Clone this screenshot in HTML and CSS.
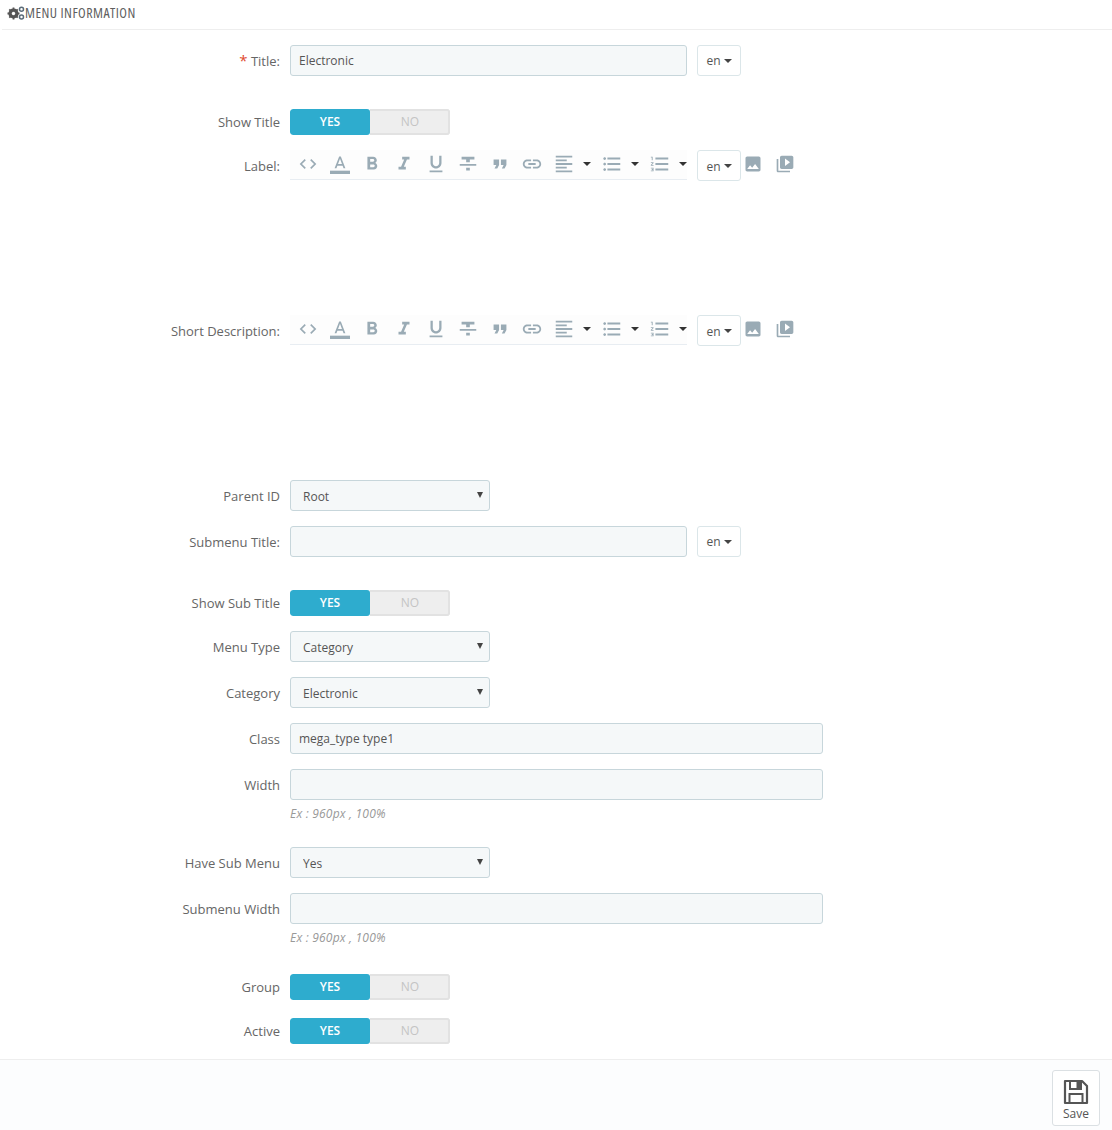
FILE: index.html
```html
<!DOCTYPE html>
<html lang="en">
<head>
<meta charset="utf-8">
<title>Menu Information</title>
<link rel="stylesheet" href="styles.css">
</head>
<body>
<svg class="defs" width="0" height="0" aria-hidden="true">
  <symbol id="i-code" viewBox="0 0 24 24"><path d="M9.4 16.6 4.8 12l4.6-4.6L8 6l-6 6 6 6zm5.2 0 4.6-4.6-4.6-4.6L16 6l6 6-6 6z"/></symbol>
  <symbol id="i-color" viewBox="0 0 24 24"><path d="M0 20h24v4H0z"/><path d="M11 3 5.500 17h2.250l1.120-3h6.250l1.120 3h2.250L13 3h-2zm-1.380 9L12 5.670 14.380 12H9.620z"/></symbol>
  <symbol id="i-bold" viewBox="0 0 24 24"><path d="M15.600 10.790c.97-.67 1.650-1.770 1.650-2.790 0-2.260-1.750-4-4-4H7v14h7.040c2.090 0 3.710-1.700 3.710-3.790 0-1.520-.86-2.820-2.150-3.420zM10 6.500h3c.83 0 1.500.67 1.500 1.500s-.67 1.500-1.500 1.500h-3v-3zm3.500 9H10v-3h3.500c.83 0 1.500.67 1.500 1.500s-.67 1.500-1.500 1.500z"/></symbol>
  <symbol id="i-italic" viewBox="0 0 24 24"><path d="M10 4v3h2.210l-3.420 8H6v3h8v-3h-2.210l3.420-8H18V4z"/></symbol>
  <symbol id="i-underline" viewBox="0 0 24 24"><path d="M12 17c3.310 0 6-2.690 6-6V3h-2.500v8c0 1.930-1.570 3.500-3.500 3.500S8.500 12.930 8.500 11V3H6v8c0 3.310 2.690 6 6 6zm-7 2v2h14v-2H5z"/></symbol>
  <symbol id="i-strike" viewBox="0 0 24 24"><path d="M10 19h4v-3h-4v3zM5 4v3h5v3h4V7h5V4H5zM3 14h18v-2H3v2z"/></symbol>
  <symbol id="i-quote" viewBox="0 0 24 24"><path d="M6 17h3l2-4V7H5v6h3zm8 0h3l2-4V7h-6v6h3z"/></symbol>
  <symbol id="i-link" viewBox="0 0 24 24"><path d="M3.900 12c0-1.710 1.390-3.100 3.100-3.100h4V7H7c-2.760 0-5 2.240-5 5s2.240 5 5 5h4v-1.900H7c-1.710 0-3.100-1.390-3.100-3.100zM8 13h8v-2H8v2zm9-6h-4v1.900h4c1.710 0 3.100 1.390 3.100 3.100s-1.390 3.100-3.100 3.100h-4V17h4c2.760 0 5-2.240 5-5s-2.240-5-5-5z"/></symbol>
  <symbol id="i-align" viewBox="0 0 24 24"><path d="M15 15H3v2h12v-2zm0-8H3v2h12V7zM3 13h18v-2H3v2zm0 8h18v-2H3v2zM3 3v2h18V3H3z"/></symbol>
  <symbol id="i-ul" viewBox="0 0 24 24"><path d="M4 10.500c-.83 0-1.500.67-1.500 1.500s.67 1.500 1.500 1.500 1.500-.67 1.500-1.500-.67-1.500-1.500-1.500zm0-6c-.83 0-1.500.67-1.500 1.500S3.170 7.500 4 7.500 5.500 6.830 5.500 6 4.830 4.500 4 4.500zm0 12c-.83 0-1.500.68-1.500 1.500s.68 1.500 1.500 1.500 1.500-.68 1.500-1.500-.67-1.500-1.500-1.500zM7 19h14v-2H7v2zm0-6h14v-2H7v2zm0-8v2h14V5H7z"/></symbol>
  <symbol id="i-ol" viewBox="0 0 24 24"><path d="M2 17h2v.5H3v1h1v.5H2v1h3v-4H2v1zm1-9h1V4H2v1h1v3zm-1 3h1.800L2 13.100v.9h3v-1H3.200L5 10.900V10H2v1zm5-6v2h14V5H7zm0 14h14v-2H7v2zm0-6h14v-2H7v2z"/></symbol>
  <symbol id="i-image" viewBox="0 0 24 24"><path d="M21 19V5c0-1.100-.9-2-2-2H5c-1.100 0-2 .9-2 2v14c0 1.100.9 2 2 2h14c1.100 0 2-.9 2-2zM8.500 13.500l2.500 3.010L14.500 12l4.500 6H5l3.500-4.500z"/></symbol>
  <symbol id="i-video" viewBox="0 0 24 24"><path d="M4 6H2v14c0 1.100.9 2 2 2h14v-2H4V6zm16-4H8c-1.100 0-2 .9-2 2v12c0 1.100.9 2 2 2h12c1.100 0 2-.9 2-2V4c0-1.100-.9-2-2-2zm-8 12.500v-9l6 4.500-6 4.500z"/></symbol>
  <symbol id="toolbar" viewBox="0 0 397 29">
    <use href="#i-code" x="8" y="4" width="20" height="20"/>
    <use href="#i-color" x="40" y="4" width="20" height="20"/>
    <use href="#i-bold" x="71" y="3" width="22" height="22"/>
    <use href="#i-italic" x="103" y="3" width="22" height="22"/>
    <use href="#i-underline" x="135" y="3" width="22" height="22"/>
    <use href="#i-strike" x="167" y="3" width="22" height="22"/>
    <use href="#i-quote" x="199" y="3" width="22" height="22"/>
    <use href="#i-link" x="231" y="3" width="22" height="22"/>
    <use href="#i-align" x="263" y="3" width="22" height="22"/>
    <path d="M293 12h8l-4 4z" fill="#333"/>
    <use href="#i-ul" x="311" y="3" width="22" height="22"/>
    <path d="M341 12h8l-4 4z" fill="#333"/>
    <use href="#i-ol" x="359" y="3" width="22" height="22"/>
    <path d="M389 12h8l-4 4z" fill="#333"/>
  </symbol>
</svg>

<header class="panel-heading">
  <svg class="cogs" viewBox="0 0 18 14" width="18" height="14" aria-hidden="true">
    <circle cx="6.500" cy="7.500" r="3.800" fill="none" stroke="#555" stroke-width="2.600"/>
    <path d="M6.500 1.500v12M.5 7.500h12M2.300 3.300l8.400 8.400M10.700 3.300l-8.400 8.400" stroke="#555" stroke-width="1.800"/>
    <circle cx="6.500" cy="7.500" r="1.700" fill="#fff"/>
    <circle cx="14.500" cy="3.300" r="2" fill="none" stroke="#5a6b78" stroke-width="1.500"/>
    <circle cx="14.500" cy="11" r="2" fill="none" stroke="#5a6b78" stroke-width="1.500"/>
  </svg>
  <span class="heading-text">MENU INFORMATION</span>
</header>

<form class="form">
  <div class="row gap-lang">
    <label class="label"><span class="req">*</span> Title:</label>
    <div class="field"><input class="input w-lang" type="text" value="Electronic"><button type="button" class="lang">en<i class="caret"></i></button></div>
  </div>
  <div class="row">
    <label class="label label-switch">Show Title</label>
    <div class="field"><div class="switch"><span class="yes">YES</span><span class="no">NO</span></div></div>
  </div>
  <div class="row editor-row">
    <label class="label">Label:</label>
    <div class="field field-top">
      <svg class="toolbar" width="397" height="30"><use href="#toolbar"/></svg>
      <button type="button" class="lang lang-editor">en<i class="caret"></i></button>
      <svg class="extra"><use href="#i-image"/></svg><svg class="extra"><use href="#i-video"/></svg>
    </div>
  </div>
  <div class="row editor-row">
    <label class="label">Short Description:</label>
    <div class="field field-top">
      <svg class="toolbar" width="397" height="30"><use href="#toolbar"/></svg>
      <button type="button" class="lang lang-editor">en<i class="caret"></i></button>
      <svg class="extra"><use href="#i-image"/></svg><svg class="extra"><use href="#i-video"/></svg>
    </div>
  </div>
  <div class="row">
    <label class="label">Parent ID</label>
    <div class="field"><div class="select"><select><option>Root</option></select></div></div>
  </div>
  <div class="row gap-lang">
    <label class="label">Submenu Title:</label>
    <div class="field"><input class="input w-lang" type="text"><button type="button" class="lang">en<i class="caret"></i></button></div>
  </div>
  <div class="row">
    <label class="label label-switch">Show Sub Title</label>
    <div class="field"><div class="switch"><span class="yes">YES</span><span class="no">NO</span></div></div>
  </div>
  <div class="row">
    <label class="label">Menu Type</label>
    <div class="field"><div class="select"><select><option>Category</option></select></div></div>
  </div>
  <div class="row">
    <label class="label">Category</label>
    <div class="field"><div class="select"><select><option>Electronic</option></select></div></div>
  </div>
  <div class="row">
    <label class="label">Class</label>
    <div class="field"><input class="input w-full" type="text" value="mega_type type1"></div>
  </div>
  <div class="row">
    <label class="label">Width</label>
    <div class="field field-col"><input class="input w-full" type="text"><p class="help">Ex : 960px , 100%</p></div>
  </div>
  <div class="row">
    <label class="label">Have Sub Menu</label>
    <div class="field"><div class="select"><select><option>Yes</option></select></div></div>
  </div>
  <div class="row gap-18">
    <label class="label">Submenu Width</label>
    <div class="field field-col"><input class="input w-full" type="text"><p class="help">Ex : 960px , 100%</p></div>
  </div>
  <div class="row gap-18">
    <label class="label label-switch">Group</label>
    <div class="field"><div class="switch"><span class="yes">YES</span><span class="no">NO</span></div></div>
  </div>
  <div class="row">
    <label class="label label-switch">Active</label>
    <div class="field"><div class="switch"><span class="yes">YES</span><span class="no">NO</span></div></div>
  </div>
</form>

<footer class="panel-footer">
  <button type="button" class="save">
    <svg viewBox="0 0 26 26" width="26" height="26" aria-hidden="true">
      <path d="M2 2h17l5 5v17H2z" fill="none" stroke="#555" stroke-width="2.200" stroke-linejoin="round"/>
      <path d="M7 2h11v8H7z" fill="none" stroke="#555" stroke-width="2"/>
      <path d="M13.500 3h4v6h-4z" fill="#555"/>
      <path d="M6.500 24v-9h13v9" fill="none" stroke="#555" stroke-width="2"/>
    </svg>
    <span>Save</span>
  </button>
</footer>
</body>
</html>
```
FILE: styles.css
```css
* { box-sizing: border-box; }
html, body { margin: 0; padding: 0; }
body {
  width: 1112px;
  height: 1130px;
  overflow: hidden;
  background: #fff;
  color: #666;
  font-family: "Open Sans", "Liberation Sans", sans-serif;
  font-size: 13px;
}
.defs { display: block; height: 0; }
.panel-heading {
  display: flex;
  align-items: center;
  gap: 0;
  height: 30px;
  margin-left: 2px;
  padding: 0 0 4px 5px;
  border-bottom: 1px solid #eee;
  color: #5f5f5f;
  font-family: "Open Sans", "Liberation Sans", sans-serif;
  font-size: 14px;
}
.heading-text {
  display: inline-block;
  font-stretch: 75%;
  letter-spacing: .45px;
  white-space: nowrap;
}
.cogs { flex: none; }
.form { padding-top: 15px; }
.row {
  display: grid;
  grid-template-columns: 280px 1fr;
  column-gap: 10px;
  margin-bottom: 15px;
}
.gap-lang { margin-bottom: 33px; }
.gap-18 { margin-bottom: 18px; }
.editor-row { height: 150px; }
.label {
  height: 31px;
  text-align: right;
  line-height: 33px;
  color: #666;
}
.label-switch { height: 26px; line-height: 26px; }
.req { color: #e0492f; font-size: 15px; line-height: 1; }
.field { display: flex; align-items: flex-start; }
.field-col { flex-direction: column; }
.field-top { height: 31px; }
.input {
  display: block;
  height: 31px;
  padding: 0 8px;
  border: 1px solid #c7d6db;
  border-radius: 3px;
  background: #f5f8f9;
  color: #555;
  font: inherit;
  font-size: 12px;
  outline: none;
}
.w-lang { width: 397px; }
.w-full { width: 533px; }
.lang {
  display: flex;
  align-items: center;
  justify-content: center;
  gap: 3px;
  width: 44px;
  height: 31px;
  margin-left: 10px;
  padding: 0;
  border: 1px solid #dbe6e9;
  border-radius: 3px;
  background: #fff;
  color: #555;
  font: inherit;
  font-size: 12px;
}
.lang-editor { padding-top: 1px; }
.caret {
  display: block;
  width: 0;
  height: 0;
  border-left: 4.500px solid transparent;
  border-right: 4.500px solid transparent;
  border-top: 4.500px solid #444;
}
.toolbar {
  display: block;
  flex: none;
  fill: #9aabb5;
  border-bottom: 1px solid #e8edf2;
  background: #fdfdfd;
}
.extra {
  display: block;
  width: 20px;
  height: 20px;
  margin: 4px 0 0 2px;
  fill: #9aabb5;
}
.extra + .extra { margin-left: 12px; }
.select { position: relative; width: 200px; height: 31px; }
.select select {
  display: block;
  width: 100%;
  height: 100%;
  padding: 1px 24px 0 12px;
  border: 1px solid #c7d6db;
  border-radius: 3px;
  background: #f5f8f9;
  color: #555;
  font: inherit;
  font-size: 12px;
  appearance: none;
  -webkit-appearance: none;
  outline: none;
}
.select::after {
  content: "";
  position: absolute;
  top: 12px;
  right: 7px;
  border-left: 3px solid transparent;
  border-right: 3px solid transparent;
  border-top: 6px solid #444;
}
.switch {
  display: flex;
  width: 160px;
  height: 26px;
  border-radius: 3px;
  overflow: hidden;
  font-size: 12px;
  font-weight: 600;
  line-height: 25px;
  text-align: center;
}
.yes { width: 80px; background: #2eacce; color: #fff; border-radius: 3px; }
.no {
  width: 80px;
  background: #eee;
  color: #c4c4c4;
  font-weight: 400;
  box-shadow: inset 0 2px 0 #e2e2e2, inset -2px 0 0 #e2e2e2, inset 0 -2px 0 #e2e2e2;
  border-radius: 0 3px 3px 0;
}
.help {
  margin: 7px 0 0;
  height: 25px;
  color: #999;
  font-size: 12px;
  font-style: italic;
  line-height: 14px;
  letter-spacing: .2px;
}
.panel-footer {
  display: flex;
  justify-content: flex-end;
  height: 71px;
  padding: 10px 12px 0 0;
  border-top: 1px solid #eee;
  background: #fcfdfe;
}
.save {
  display: flex;
  flex-direction: column;
  align-items: center;
  width: 48px;
  height: 56px;
  padding: 8px 0 0;
  border: 1px solid #dbe0e3;
  border-radius: 3px;
  background: #fff;
  color: #555;
  font: inherit;
  font-size: 12px;
  line-height: 18px;
}
```
